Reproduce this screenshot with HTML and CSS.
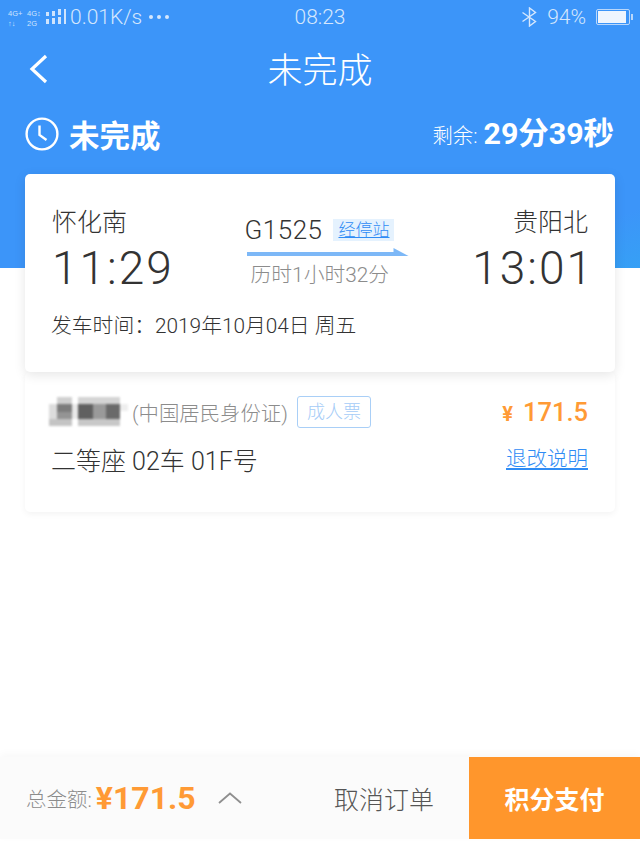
FILE: index.html
```html
<!DOCTYPE html>
<html lang="zh-CN">
  <head>
    <meta charset="UTF-8" />
    <meta name="viewport" content="width=device-width, initial-scale=1.0" />
    <title>未完成</title>
    <link rel="stylesheet" href="styles.css">
  </head>

  <body>
    <div class="page">
      <header class="top">
        <div class="status">
          <div class="status-left">
            <svg class="signal" width="58" height="20" viewBox="0 0 58 20" fill="#cfe4fd">
              <text x="0" y="9" class="net">4G+</text>
              <text x="0" y="19" class="net">↑↓</text>
              <text x="19" y="9" class="net">4G↕</text>
              <text x="19" y="19" class="net">2G</text>
              <rect x="38" y="12" width="3" height="5" />
              <rect x="38" y="5" width="3" height="4" />
              <rect x="44" y="11" width="3" height="6" />
              <rect x="44" y="4" width="3" height="5" />
              <rect x="50" y="10" width="3" height="7" />
              <rect x="50" y="2" width="3" height="6" />
              <rect x="56" y="2" width="2.5" height="15" />
            </svg>
            <span class="speed">0.01K/s</span>
            <span class="dots"><i></i><i></i><i></i></span>
          </div>
          <span class="clock">08:23</span>
          <div class="status-right">
            <svg width="17" height="20" viewBox="0 0 17 20" fill="none" stroke="#d5e7fd" stroke-width="1.4">
              <path d="M1.5 5.5 L14.5 14.5 L8.5 19 V1 L14.5 5.5 L1.5 14.5" />
            </svg>
            <span class="pct">94%</span>
            <span class="battery"><span class="battery-fill"></span></span>
          </div>
        </div>

        <nav class="nav">
          <svg class="back" width="22" height="30" viewBox="0 0 22 30" fill="none" stroke="#fff" stroke-width="3.2">
            <path d="M18 2 L4 15 L18 28" />
          </svg>
          <h1>未完成</h1>
        </nav>

        <div class="summary">
          <div class="state">
            <svg width="34" height="34" viewBox="0 0 34 34" fill="none" stroke="#fff" stroke-width="2.4">
              <circle cx="17" cy="17" r="15.4" />
              <path d="M14.5 8.5 V18 L21.5 23" />
            </svg>
            <span>未完成</span>
          </div>
          <div class="remain">
            <span class="remain-label">剩余:</span>
            <span class="remain-time">29分39秒</span>
          </div>
        </div>
      </header>

      <main class="content">
        <section class="card train">
          <div class="route">
            <div class="stop">
              <div class="station">怀化南</div>
              <div class="time">11:29</div>
            </div>
            <div class="trip">
              <div class="trip-top">
                <span class="train-no">G1525</span>
                <a class="stops">经停站</a>
              </div>
              <div class="arrow"></div>
              <div class="duration">历时1小时32分</div>
            </div>
            <div class="stop stop-end">
              <div class="station">贵阳北</div>
              <div class="time">13:01</div>
            </div>
          </div>
          <div class="depart">发车时间：2019年10月04日 周五</div>
        </section>

        <section class="card ticket">
          <div class="ticket-row">
            <div class="passenger">
              <svg class="mosaic" width="80" height="30" viewBox="0 0 80 30">
                <rect x="8" y="0" width="15" height="7" fill="#d0d0d0" />
                <rect x="29" y="0" width="42" height="7" fill="#d4d4d4" />
                <rect x="71" y="7" width="8" height="7" fill="#eeeeee" />
                <rect x="0" y="7" width="8" height="15" fill="#dcdcdc" />
                <rect x="8" y="7" width="15" height="8" fill="#7c7c7c" />
                <rect x="8" y="15" width="15" height="7" fill="#949494" />
                <rect x="23" y="7" width="6" height="15" fill="#e8e8e8" />
                <rect x="29" y="7" width="15" height="15" fill="#606060" />
                <rect x="44" y="7" width="13" height="15" fill="#9a9a9a" />
                <rect x="57" y="7" width="14" height="15" fill="#6a6a6a" />
                <rect x="0" y="22" width="23" height="7" fill="#c4c4c4" />
                <rect x="29" y="22" width="42" height="7" fill="#c8c8c8" />
              </svg>
              <span class="id-type">(中国居民身份证)</span>
              <span class="ticket-type">成人票</span>
            </div>
            <div class="price"><span class="yen">¥</span>171.5</div>
          </div>
          <div class="ticket-row ticket-row-low">
            <div class="seat">二等座 02车 01F号</div>
            <a class="rules">退改说明</a>
          </div>
        </section>
      </main>

      <footer class="bar">
        <div class="total">
          <span class="total-label">总金额:</span>
          <span class="total-price">¥171.5</span>
          <svg width="24" height="12" viewBox="0 0 24 12" fill="none" stroke="#8f8f8f" stroke-width="1.8">
            <path d="M1 11 L12 1.5 L23 11" />
          </svg>
        </div>
        <a class="cancel">取消订单</a>
        <a class="pay">积分支付</a>
      </footer>
    </div>
  </body>
</html>
```

FILE: styles.css
```css
* {
  margin: 0;
  padding: 0;
  box-sizing: border-box;
}

body {
  background-color: #fff;
  color: #333;
  font-family: Roboto, "Noto Sans CJK SC", sans-serif;
}

.page {
  display: flex;
  flex-direction: column;
  width: 640px;
  height: 843px;
  overflow: hidden;
}

.top {
  height: 268px;
  flex-shrink: 0;
  color: #fff;
  background: linear-gradient(160deg, #3c95f9 0%, #3c95f9 88%, #36a0f5 100%);
}

.status {
  display: flex;
  align-items: center;
  justify-content: space-between;
  height: 34px;
  padding: 0 8px;
  color: #d5e7fd;
  font-size: 21px;
  font-weight: 300;
}

.status-left,
.status-right {
  display: flex;
  align-items: center;
  width: 240px;
}

.status-right {
  justify-content: flex-end;
  padding-right: 2px;
}

.net {
  font-size: 7.5px;
  font-family: "Liberation Sans", sans-serif;
}

.signal {
  margin-right: 4px;
}

.dots {
  display: flex;
  gap: 4px;
  margin-left: 7px;
}

.dots i {
  width: 4px;
  height: 4px;
  border-radius: 50%;
  background-color: #d5e7fd;
}

.pct {
  margin: 0 10px 0 9px;
}

.battery {
  display: block;
  width: 34px;
  height: 16px;
  padding: 1px;
  border: 1px solid #b9d7fb;
  border-radius: 2px;
  position: relative;
}

.battery::after {
  content: "";
  position: absolute;
  top: 4px;
  right: -4px;
  width: 2px;
  height: 6px;
  background-color: #b9d7fb;
}

.battery-fill {
  display: block;
  height: 100%;
  width: 94%;
  background-color: #eef5fe;
}

.nav {
  display: flex;
  align-items: center;
  justify-content: center;
  height: 72px;
  padding-top: 2px;
  position: relative;
}

.back {
  position: absolute;
  left: 28px;
  top: 20px;
}

.nav h1 {
  font-size: 35px;
  font-weight: 300;
  line-height: 1;
}

.summary {
  display: flex;
  align-items: center;
  justify-content: space-between;
  padding: 6px 26px 0 25px;
}

.state {
  display: flex;
  align-items: center;
  gap: 10px;
  font-size: 30.5px;
  font-weight: 700;
}

.remain {
  display: flex;
  align-items: center;
  gap: 6px;
  margin-top: -6px;
}

.remain-label {
  font-size: 20.4px;
  font-weight: 300;
  margin-top: 6px;
}

.remain-time {
  font-size: 30.4px;
  font-weight: 700;
}

.content {
  flex: 1;
  margin-top: -94px;
  padding: 0 25px;
}

.card {
  background-color: #fff;
  border-radius: 5px;
}

.train {
  height: 198px;
  padding: 30px 27px 0;
  position: relative;
  box-shadow: 0 3px 12px rgba(0, 0, 0, 0.1);
}

.route {
  display: flex;
  justify-content: space-between;
}

.station {
  font-size: 25px;
  font-weight: 300;
  line-height: 38px;
  color: #333;
}

.stop-end {
  text-align: right;
}

.stop-end .time {
  margin-right: -6px;
}

.time {
  font-size: 46px;
  font-weight: 300;
  line-height: 52px;
  letter-spacing: 2px;
  color: #333;
}

.trip {
  width: 164px;
  padding-top: 11px;
  margin-left: 7px;
}

.trip-top {
  display: flex;
  align-items: center;
  gap: 11px;
  height: 30px;
}

.train-no {
  font-size: 26px;
  font-weight: 300;
  color: #333;
  letter-spacing: 0.5px;
}

.stops {
  padding: 0 5px;
  font-size: 17px;
  font-weight: 300;
  line-height: 22px;
  color: #2f8cf5;
  text-decoration: underline;
  background-color: #e5f2fe;
}

.arrow {
  width: 162px;
  height: 8px;
  margin-top: 3px;
  margin-left: 2px;
  background-color: #7db8f7;
  clip-path: polygon(0 4px, 147px 4px, 147px 0, 162px 8px, 0 8px);
}

.duration {
  margin-top: 5px;
  margin-left: 6px;
  font-size: 20.8px;
  font-weight: 300;
  line-height: 28px;
  color: #8c8c8c;
  white-space: nowrap;
}

.depart {
  margin-top: 18px;
  margin-left: -1px;
  font-size: 20.8px;
  font-weight: 300;
  line-height: 28px;
  color: #333;
}

.ticket {
  display: flex;
  flex-direction: column;
  gap: 16px;
  height: 140px;
  padding: 24px 27px 0 24px;
  box-shadow: 0 2px 6px rgba(0, 0, 0, 0.05);
}

.ticket-row {
  display: flex;
  align-items: center;
  justify-content: space-between;
  height: 32px;
}

.ticket-row-low {
  padding-left: 3px;
  height: 30px;
}

.passenger {
  display: flex;
  align-items: center;
}

.mosaic {
  margin-right: 3px;
  filter: blur(0.8px);
}

.id-type {
  font-size: 20.4px;
  font-weight: 300;
  color: #8c8c8c;
}

.ticket-type {
  margin-left: 9px;
  padding: 0 9px;
  font-size: 18px;
  line-height: 30px;
  font-weight: 300;
  color: #a5ccf7;
  border: 1px solid #a9cff7;
  border-radius: 3px;
}

.price {
  font-size: 25.5px;
  font-weight: 500;
  color: #ff9a35;
}

.yen {
  font-size: 20px;
  font-weight: 700;
  margin-right: 10px;
}

.seat {
  font-size: 25px;
  font-weight: 300;
  color: #333;
  margin-left: -1px;
}

.rules {
  font-size: 20.5px;
  font-weight: 300;
  color: #2f8cf5;
  text-decoration: underline;
  margin-top: -4px;
}

.bar {
  display: flex;
  align-items: center;
  flex-shrink: 0;
  height: 82px;
  margin-bottom: 4px;
  background-color: #fbfbfb;
  box-shadow: 0 -3px 8px rgba(0, 0, 0, 0.03);
}

.total {
  display: flex;
  align-items: center;
  flex: 1;
  padding-left: 26px;
}

.total-label {
  font-size: 20.5px;
  font-weight: 300;
  color: #8c8c8c;
}

.total-price {
  margin-left: 4px;
  font-size: 32px;
  font-weight: 700;
  color: #ff9a35;
}

.total svg {
  margin-left: 22px;
}

.cancel {
  width: 135px;
  font-size: 25px;
  font-weight: 300;
  color: #555;
}

.pay {
  display: flex;
  align-items: center;
  justify-content: center;
  width: 171px;
  height: 100%;
  font-size: 25px;
  font-weight: 700;
  color: #fff;
  background-color: #ff962c;
}
```
